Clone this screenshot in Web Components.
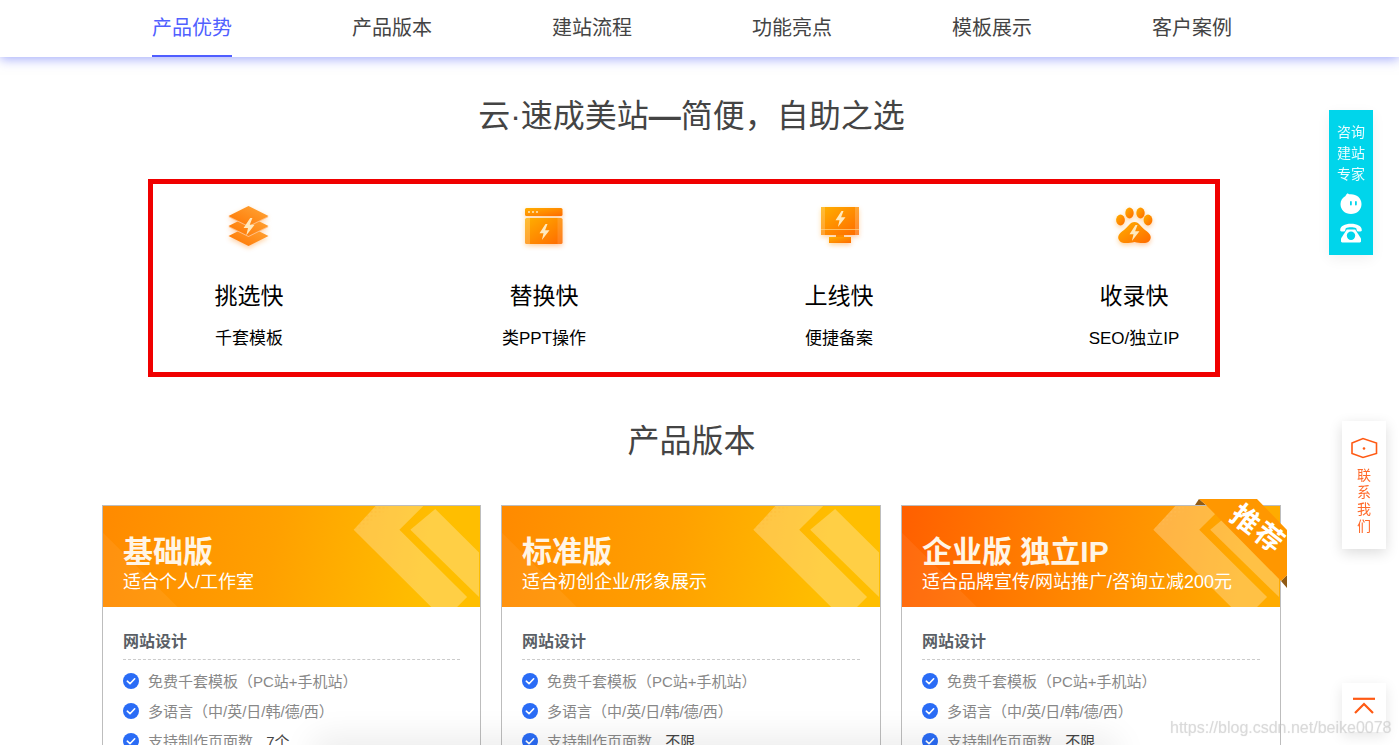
<!DOCTYPE html>
<html lang="zh-CN">
<head>
<meta charset="utf-8">
<title>云·速成美站</title>
<style>
html,body{margin:0;height:745px;overflow:hidden;background:#fff;}
body{font-family:"Liberation Sans","Noto Sans CJK SC",sans-serif;color:#444;}
</style>
</head>
<body>
<site-nav active="0" items="产品优势,产品版本,建站流程,功能亮点,模板展示,客户案例"></site-nav>
<section-title top="36">云·速成美站<b>&#x2014;</b>简便&#xFF0C;自助之选</section-title>
<feature-box>
	<feature-item icon="layers" name="挑选快" note="千套模板"></feature-item>
	<feature-item icon="window" name="替换快" note="类PPT操作"></feature-item>
	<feature-item icon="monitor" name="上线快" note="便捷备案"></feature-item>
	<feature-item icon="paw" name="收录快" note="SEO/独立IP"></feature-item>
</feature-box>
<section-title top="41">产品版本</section-title>
<plan-list>
	<plan-card name="基础版" desc="适合个人/工作室" pages="7个"></plan-card>
	<plan-card name="标准版" desc="适合初创企业/形象展示" pages="不限"></plan-card>
	<plan-card name="企业版 独立IP" desc="适合品牌宣传/网站推广/咨询立减200元" pages="不限" hot></plan-card>
</plan-list>
<side-widgets></side-widgets>

<script>
'use strict';

const BOLT = 'M7 0L1 9.2H5L3.4 16L11 6.2H6.6L9 0Z';
const DIAMOND = 'M9.5 16L29.5 6L49.5 16L29.5 26Z';

const ICONS = {
	layers:`
		<path d="${DIAMOND}" fill="url(#g2)" transform="translate(0 20)"/>
		<path d="${DIAMOND}" fill="#ffc08a" transform="translate(0 11)"/>
		<path d="${DIAMOND}" fill="url(#g2)" transform="translate(0 10)"/>
		<path d="${DIAMOND}" fill="#ffc08a" transform="translate(0 1)"/>
		<path d="${DIAMOND}" fill="url(#g2)"/>
		<path d="${BOLT}" transform="translate(23.5 18) scale(1.1)" fill="#ffe9bd"/>`,
	window:`
		<rect x="11" y="8" width="37.5" height="8" rx="1.5" fill="url(#g)"/>
		<circle cx="15" cy="12" r="1" fill="#ffe9bd"/><circle cx="19" cy="12" r="1" fill="#ffe9bd"/><circle cx="23" cy="12" r="1" fill="#ffe9bd"/>
		<rect x="11" y="18" width="37.5" height="26" rx="1.5" fill="url(#g)"/>
		<rect x="11" y="18" width="5" height="26" fill="#fff" opacity=".2"/>
		<rect x="43.5" y="18" width="5" height="26" fill="#fff" opacity=".12"/>
		<path d="${BOLT}" transform="translate(24.5 24)" fill="#ffe9bd"/>`,
	monitor:`
		<rect x="12" y="7" width="38" height="28" fill="url(#g)"/>
		<rect x="12" y="7" width="4" height="28" fill="#fff" opacity=".2"/>
		<rect x="46" y="7" width="4" height="28" fill="#fff" opacity=".2"/>
		<rect x="12" y="29" width="38" height=".7" fill="#ffd48a"/>
		<rect x="27" y="35" width="8" height="2" fill="#ff8a00"/>
		<rect x="20" y="37" width="22" height="6" fill="url(#g)"/>
		<path d="${BOLT}" transform="translate(25.5 11)" fill="#ffe9bd"/>`,
	paw:`
		<ellipse cx="16.5" cy="20" rx="4.4" ry="5.4" fill="url(#g)"/>
		<ellipse cx="25.5" cy="13" rx="4.2" ry="5.4" fill="url(#g)"/>
		<ellipse cx="36.5" cy="13" rx="4.2" ry="5.4" fill="url(#g)"/>
		<ellipse cx="44" cy="20" rx="4.4" ry="5.4" fill="url(#g)"/>
		<path d="M30.5 22C26 22 24 27 20 30C15 33 13 37 15 40C17 44 24 43.5 30.5 42C37 43.5 44 44 46 40C48 37 46 33 41 30C37 27 35 22 30.5 22Z" fill="url(#g)"/>
		<path d="${BOLT}" transform="translate(24.5 25)" fill="#ffe9bd"/>`
};

class SiteNav extends HTMLElement {
	constructor(){
		super();
		this.attachShadow({mode:'open'});
	}
	connectedCallback(){
		let items = this.getAttribute('items').split(',');
		let active = +this.getAttribute('active');
		this.shadowRoot.innerHTML =
			'<style>'+SiteNav.InitialCss+'</style>'+
			'<nav>'+items.map((item,i)=>{
				return `<a class="${i===active?'on':''}">${item}</a>`;
			}).join('')+'</nav>';
	}
	static get InitialCss(){
		return`
:host{
	display:block;
	height:57px;
	background:#fff;
	box-shadow:0 2px 11px rgba(70,85,245,.5);
	clip-path:inset(0 0 -20px 0);
}
nav{
	display:grid;
	grid-template-columns:repeat(6,200px);
	padding-left:152px;
	height:57px;
}
a{
	box-sizing:border-box;
	width:80px;
	height:57px;
	padding-top:1px;
	font-size:20px;
	line-height:54px;
	color:#444;
	white-space:nowrap;
}
a.on{
	color:#5060ff;
	border-bottom:2px solid #4f5dff;
}
		`;
	}
}

class SectionTitle extends HTMLElement {
	constructor(){
		super();
		this.attachShadow({mode:'open'});
	}
	connectedCallback(){
		this.shadowRoot.innerHTML = `
<style>
:host{
	display:block;
	width:1383px;
	margin-top:${this.getAttribute('top')}px;
	font-size:32px;
	line-height:46px;
	text-align:center;
	color:#444;
}
</style>
<slot></slot>`;
	}
}

class FeatureBox extends HTMLElement {
	constructor(){
		super();
		this.attachShadow({mode:'open'}).innerHTML = `
<style>
:host{
	display:flex;
	justify-content:space-between;
	box-sizing:border-box;
	width:1072px;
	height:198px;
	margin:40px 0 0 148px;
	padding:0 31px 0 46px;
	border:5px solid #f00000;
}
</style>
<slot></slot>`;
	}
}

class FeatureItem extends HTMLElement {
	constructor(){
		super();
		this.attachShadow({mode:'open'});
	}
	connectedCallback(){
		let id = this.getAttribute('icon');
		this.shadowRoot.innerHTML = `
<style>
:host{
	display:flex;
	flex-direction:column;
	align-items:center;
	width:100px;
	color:#000;
}
svg{
	width:60px;
	height:60px;
	margin-top:16px;
}
.name{
	margin-top:21px;
	font-size:23px;
	line-height:30px;
}
.note{
	margin-top:16px;
	font-size:17px;
	line-height:24px;
	white-space:nowrap;
}
</style>
<svg viewBox="0 0 60 60">
	<defs>
		<linearGradient id="g" x1="0" y1="0" x2="1" y2="1"><stop offset="0" stop-color="#ffb000"/><stop offset="1" stop-color="#ff6a00"/></linearGradient>
		<linearGradient id="g2" x1="0" y1="1" x2="1" y2="0"><stop offset="0" stop-color="#ff7400"/><stop offset="1" stop-color="#ffa83a"/></linearGradient>
		<filter id="s" x="-30%" y="-30%" width="160%" height="160%"><feGaussianBlur stdDeviation="2.6"/></filter>
	</defs>
	<g filter="url(#s)" opacity=".4" transform="translate(0 2)">${ICONS[id]}</g>
	${ICONS[id]}
</svg>
<div class="name">${this.getAttribute('name')}</div>
<div class="note">${this.getAttribute('note')}</div>`;
	}
}

class PlanList extends HTMLElement {
	constructor(){
		super();
		this.attachShadow({mode:'open'}).innerHTML = `
<style>
:host{
	display:grid;
	grid-template-columns:379px 380px 380px;
	column-gap:20px;
	width:1179px;
	margin:41px 0 0 102px;
}
</style>
<slot></slot>`;
	}
}

class CheckItem extends HTMLElement {
	constructor(){
		super();
		this.attachShadow({mode:'open'}).innerHTML = `
<style>
:host{
	display:flex;
	align-items:center;
	gap:9px;
	height:30px;
	font-size:15px;
	color:#888;
	white-space:nowrap;
}
svg{width:16px;height:16px;flex:none;}
span{margin-top:-2px;}
::slotted(em){font-style:normal;color:#444;margin-left:9px;}
</style>
<svg viewBox="0 0 16 16"><circle cx="8" cy="8" r="8" fill="#2a6cf6"/><path d="M4.3 8.2L7 10.7L11.7 5.8" fill="none" stroke="#fff" stroke-width="1.6" stroke-linecap="round" stroke-linejoin="round"/></svg>
<span><slot></slot></span>`;
	}
}

class PlanCard extends HTMLElement {
	constructor(){
		super();
		this.attachShadow({mode:'open'});
	}
	get hot(){
		return this.hasAttribute('hot');
	}
	connectedCallback(){
		this.shadowRoot.innerHTML =
			'<style>'+PlanCard.InitialCss+'</style>'+
			this.Template;
		let list = this.shadowRoot.querySelector('.list');
		let rows = [
			'免费千套模板&#xFF08;PC站+手机站&#xFF09;',
			'多语言&#xFF08;中/英/日/韩/德/西&#xFF09;',
			`支持制作页面数 <em>${this.getAttribute('pages')}</em>`
		];
		for(let row of rows){
			let item = document.createElement('check-item');
			item.innerHTML = row;
			list.append(item);
		}
	}
	get Template(){
		let hot = this.hot;
		return`
<header class="${hot?'hot':''}">
	<svg class="deco" viewBox="0 0 379 102" preserveAspectRatio="none">
		<defs>
			<pattern id="d" width="4" height="4" patternUnits="userSpaceOnUse"><circle cx="2" cy="2" r=".8" fill="${hot?'#ffe0a0':'#ff9000'}"/></pattern>
			<linearGradient id="f" x1="0" y1="0" x2="1" y2="1"><stop offset="0" stop-color="#fff"/><stop offset=".35" stop-color="#000"/></linearGradient>
			<mask id="m"><rect x="250" y="0" width="60" height="50" fill="url(#f)"/></mask>
		</defs>
		<path d="M0 27L75 102H0Z" fill="#fff" opacity=".06"/>
		<path d="M274 0H322L298 24L366 92L356 102H330L252 24Z" fill="#fff" opacity=".27"/>
		<path d="M334 3L378 47V92L309 24Z" fill="#fff" opacity=".27"/>
		<path d="M274 0H322L298 24L310 36H275L252 24Z" fill="url(#d)" mask="url(#m)" opacity="${hot?'.7':'.8'}"/>
	</svg>
	<h3>${this.getAttribute('name')}</h3>
	<p>${this.getAttribute('desc')}</p>
</header>
${hot?this.Ribbon:''}
<div class="body">
	<h4>网站设计</h4>
	<div class="list"></div>
</div>`;
	}
	get Ribbon(){
		return`
<div class="ribbon">
	<svg viewBox="0 0 96 92" width="96" height="92">
		<path d="M3 6L7 0L14 6Z" fill="#8f5a14"/>
		<path d="M89 82L95 76V89Z" fill="#8f5a14"/>
		<path d="M7 0H65L95 31V76L89 82L14 6Z" fill="#ff9700"/>
	</svg>
	<span>推荐</span>
</div>`;
	}
	static get InitialCss(){
		return`
:host{
	display:block;
	position:relative;
	height:400px;
	border:1px solid #bdbdbd;
	background:#fff;
}
header{
	position:relative;
	box-sizing:border-box;
	height:101px;
	padding:27px 20px 0;
	background:linear-gradient(100deg,#ff8a00 0%,#ffa000 45%,#ffbe00 85%);
	color:#fff;
	overflow:hidden;
}
header.hot{
	background:linear-gradient(100deg,#ff5f00 0%,#ff8a00 50%,#ffab00 90%);
}
.deco{
	position:absolute;
	left:0;
	top:0;
	width:100%;
	height:100%;
}
h3{
	position:relative;
	margin:0;
	font-size:30px;
	line-height:37px;
	font-weight:700;
	color:#fff5e6;
	white-space:nowrap;
}
p{
	position:relative;
	margin:0;
	font-size:18px;
	line-height:24px;
	white-space:nowrap;
}
.ribbon{
	position:absolute;
	left:290px;
	top:-7px;
	width:96px;
	height:92px;
}
.ribbon svg{display:block;}
.ribbon span{
	position:absolute;
	left:35px;
	top:14px;
	width:64px;
	font-size:28px;
	line-height:36px;
	font-weight:700;
	color:#fff;
	letter-spacing:2px;
	white-space:nowrap;
	transform:rotate(38deg);
}
.body{
	padding:23px 20px 0;
}
h4{
	margin:0;
	padding-bottom:5px;
	border-bottom:1px dashed #ccc;
	font-size:16px;
	line-height:24px;
	font-weight:700;
	color:#5a5f66;
}
.list{
	margin-top:6px;
}
		`;
	}
}

class SideWidgets extends HTMLElement {
	constructor(){
		super();
		this.attachShadow({mode:'open'}).innerHTML = `
<style>
.consult,.contact,.top{position:fixed;box-sizing:border-box;text-align:center;}
.consult{
	left:1329px;
	top:110px;
	width:44px;
	height:145px;
	padding-top:12px;
	background:#00d5eb;
	box-shadow:0 4px 14px rgba(0,0,0,.06);
	color:#e8fdff;
	font-size:14px;
	line-height:21px;
}
.consult svg{display:block;margin:0 auto;}
.contact{
	left:1342px;
	top:421px;
	width:44px;
	height:128px;
	padding-top:16px;
	background:#fff;
	box-shadow:0 4px 14px rgba(0,0,0,.14);
	color:#ff6a2b;
	font-size:14px;
	line-height:17px;
}
.contact svg{display:block;margin:0 auto 8px;}
.top{
	left:1342px;
	top:683px;
	width:44px;
	height:49px;
	padding-top:13px;
	background:#fff;
	box-shadow:0 4px 14px rgba(0,0,0,.1);
}
.top svg{display:block;margin:0 auto;}
.shade{
	position:fixed;
	left:320px;
	top:745px;
	width:790px;
	height:20px;
	box-shadow:0 0 34px 6px rgba(0,0,0,.09);
}
.mark{
	position:fixed;
	left:1170px;
	top:719px;
	font-size:16px;
	line-height:18px;
	color:rgba(210,210,210,.65);
	text-shadow:0 0 1px rgba(120,120,120,.2);
	white-space:nowrap;
}
</style>
<div class="shade"></div>
<aside class="consult">
	咨询<br>建站<br>专家
	<svg width="24" height="24" viewBox="0 0 24 24" style="margin-top:6px">
		<path d="M8.6 2.2C9.5 3.2 10.5 3.3 12 3.3C17.5 3.3 22.5 7 22.5 13C22.5 19 18 23 12 23C6 23 1.5 19 1.5 13C1.5 9.5 3.5 6.5 6.5 5C7 4 7.5 3 8.6 2.2Z" fill="#fff"/>
		<rect x="11" y="10" width="1.8" height="4.5" rx=".9" fill="#00d5eb"/><rect x="16" y="10" width="1.8" height="4.5" rx=".9" fill="#00d5eb"/>
	</svg>
	<svg width="24" height="20" viewBox="0 0 24 20" style="margin-top:8px">
		<path d="M1.2 7.5C1 3 6 .8 12 .8C18 .8 23 3 22.8 7.5C22.7 8.7 20 8.8 18.3 8.2C17.6 7.9 17.7 6.2 17.2 5.2C14.5 4 9.5 4 6.8 5.2C6.3 6.2 6.4 7.9 5.7 8.2C4 8.8 1.3 8.7 1.2 7.5Z" fill="#fff"/>
		<path d="M7.8 6.4H16.2L22 15.5V18.2C22 18.9 21.5 19.4 20.8 19.4H3.2C2.5 19.4 2 18.9 2 18.2V15.5Z" fill="#fff"/>
		<circle cx="12" cy="12.8" r="4.2" fill="#00d5eb"/>
	</svg>
</aside>
<aside class="contact">
	<svg width="28" height="22" viewBox="0 0 28 22"><path d="M2 6L13 1.5L26.5 6V16.5L13 20.5L2 16.5Z" fill="none" stroke="#ff5a14" stroke-width="1.6"/><circle cx="14" cy="11.5" r="1.3" fill="#ff5a14"/></svg>
	联<br>系<br>我<br>们
</aside>
<aside class="top">
	<svg width="24" height="20" viewBox="0 0 24 20"><path d="M1 2.8H23" stroke="#ff5a14" stroke-width="2.2"/><path d="M3 17L12 8L21 17" fill="none" stroke="#ff5a14" stroke-width="2.2"/></svg>
</aside>
<div class="mark">https://blog.csdn.net/beike0078</div>`;
	}
}

window.customElements.define('site-nav',SiteNav);
window.customElements.define('section-title',SectionTitle);
window.customElements.define('feature-box',FeatureBox);
window.customElements.define('feature-item',FeatureItem);
window.customElements.define('plan-list',PlanList);
window.customElements.define('check-item',CheckItem);
window.customElements.define('plan-card',PlanCard);
window.customElements.define('side-widgets',SideWidgets);
</script>
</body>
</html>
